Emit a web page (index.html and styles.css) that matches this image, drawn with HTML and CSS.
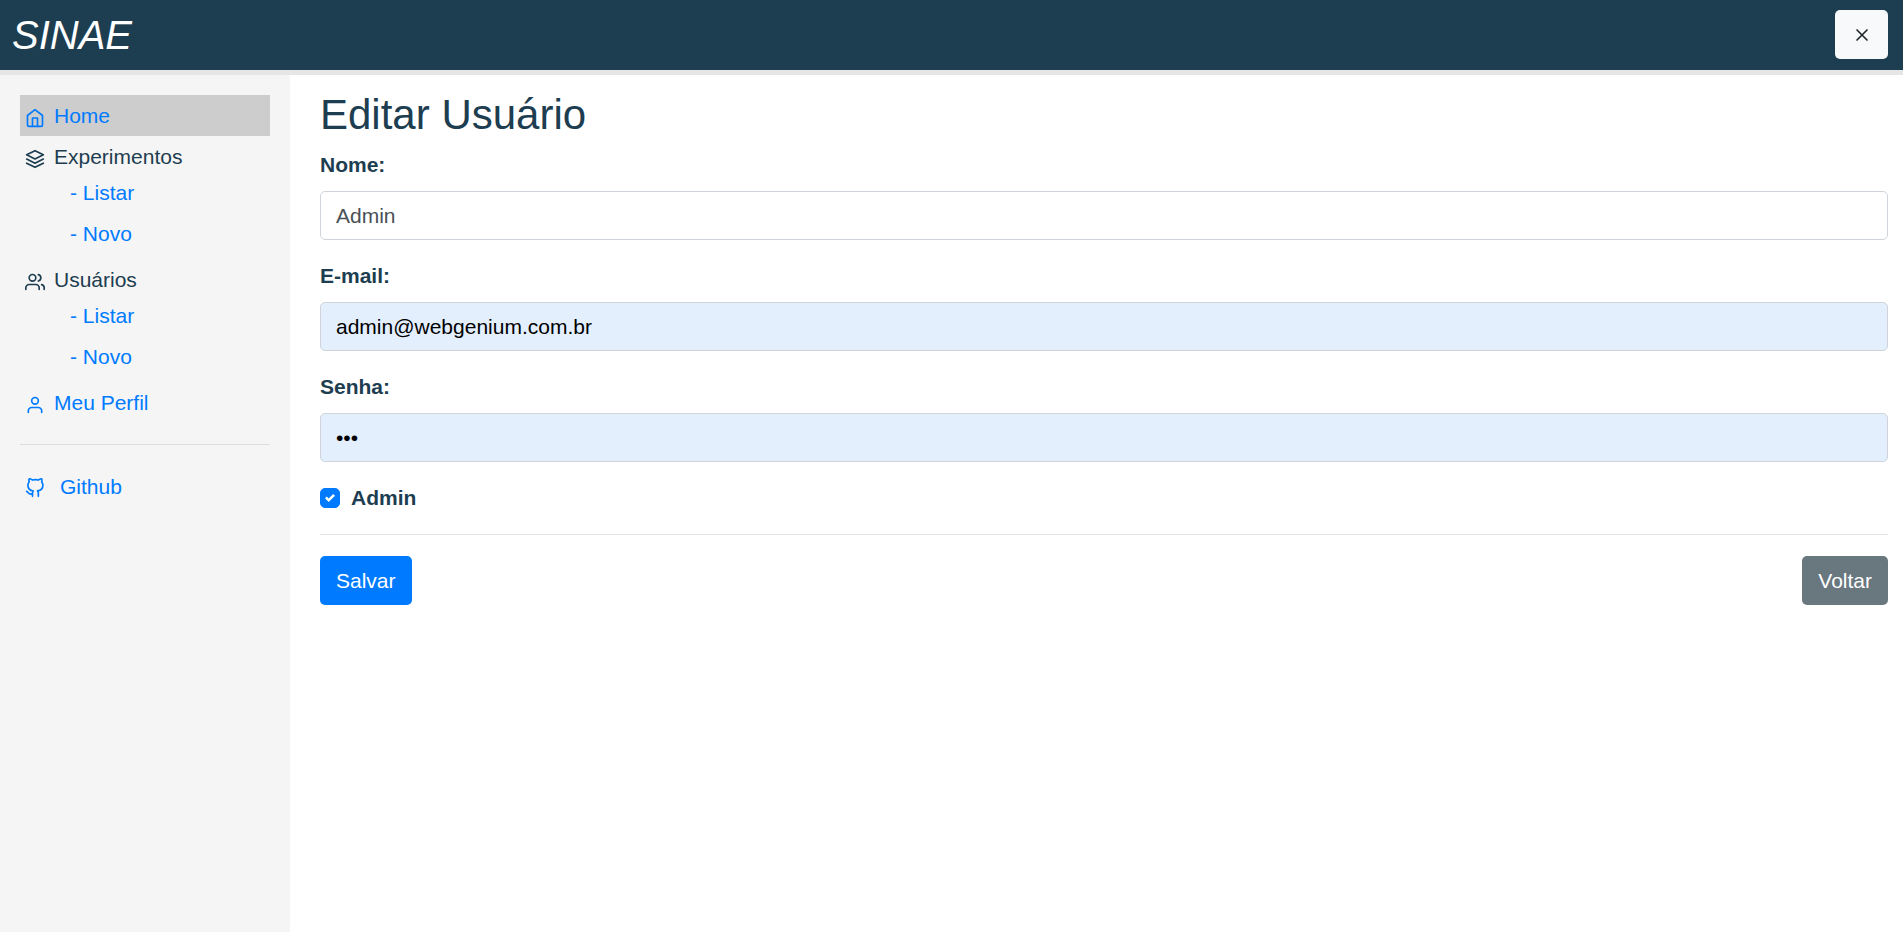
FILE: index.html
```html
<!DOCTYPE html>
<html lang="pt-BR">
<head>
  <meta charset="utf-8">
  <meta name="viewport" content="width=device-width, initial-scale=1">
  <title>SINAE - Editar Usuário</title>
  <link rel="stylesheet" href="styles.css">
</head>
<body>
  <header class="topbar">
    <span class="brand">SINAE</span>
    <button class="btn btn-light" type="button" aria-label="Fechar">
      <svg class="icon" viewBox="0 0 24 24"><path d="M18 6 6 18M6 6l12 12"/></svg>
    </button>
  </header>
  <div class="layout">
    <nav class="sidebar">
      <a class="item active" href="#">
        <svg class="icon" viewBox="0 0 24 24"><path d="M3 9l9-7 9 7v11a2 2 0 0 1-2 2H5a2 2 0 0 1-2-2z"/><path d="M9 22V12h6v10"/></svg>
        <span>Home</span>
      </a>
      <section class="group">
        <div class="item group-title">
          <svg class="icon" viewBox="0 0 24 24"><path d="M12 2 2 7l10 5 10-5-10-5z"/><path d="M2 17l10 5 10-5"/><path d="M2 12l10 5 10-5"/></svg>
          <span>Experimentos</span>
        </div>
        <a class="subitem" href="#">- Listar</a>
        <a class="subitem" href="#">- Novo</a>
      </section>
      <section class="group">
        <div class="item group-title">
          <svg class="icon" viewBox="0 0 24 24"><path d="M17 21v-2a4 4 0 0 0-4-4H5a4 4 0 0 0-4 4v2"/><circle cx="9" cy="7" r="4"/><path d="M23 21v-2a4 4 0 0 0-3-3.87"/><path d="M16 3.13a4 4 0 0 1 0 7.75"/></svg>
          <span>Usuários</span>
        </div>
        <a class="subitem" href="#">- Listar</a>
        <a class="subitem" href="#">- Novo</a>
      </section>
      <a class="item" href="#">
        <svg class="icon" viewBox="0 0 24 24"><path d="M20 21v-2a4 4 0 0 0-4-4H8a4 4 0 0 0-4 4v2"/><circle cx="12" cy="7" r="4"/></svg>
        <span>Meu Perfil</span>
      </a>
      <hr class="divider">
      <a class="item external" href="#">
        <svg class="icon" viewBox="0 0 24 24"><path d="M9 19c-5 1.5-5-2.5-7-3m14 6v-3.87a3.37 3.37 0 0 0-.94-2.61c3.14-.35 6.44-1.54 6.44-7A5.44 5.44 0 0 0 20 4.77 5.07 5.07 0 0 0 19.91 1S18.73.65 16 2.48a13.38 13.38 0 0 0-7 0C6.27.65 5.09 1 5.09 1A5.07 5.07 0 0 0 5 4.77a5.44 5.44 0 0 0-1.5 3.78c0 5.42 3.3 6.61 6.44 7A3.37 3.37 0 0 0 9 18.13V22"/></svg>
        <span>Github</span>
      </a>
    </nav>
    <main class="content">
      <h1 class="title">Editar Usuário</h1>
      <form>
        <div class="field">
          <label for="nome">Nome:</label>
          <input class="control" id="nome" type="text" value="Admin">
        </div>
        <div class="field">
          <label for="email">E-mail:</label>
          <input class="control filled" id="email" type="email" value="admin@webgenium.com.br">
        </div>
        <div class="field">
          <label for="senha">Senha:</label>
          <input class="control filled" id="senha" type="password" value="123">
        </div>
        <div class="check">
          <input class="checkbox" id="admin" type="checkbox" checked>
          <label for="admin">Admin</label>
        </div>
        <hr class="rule">
        <div class="actions">
          <button class="btn btn-primary" type="button">Salvar</button>
          <a class="btn btn-secondary" href="#">Voltar</a>
        </div>
      </form>
    </main>
  </div>
</body>
</html>
```
FILE: styles.css
```css
* {
  box-sizing: border-box;
}

body {
  margin: 0;
  min-height: 100vh;
  display: flex;
  flex-direction: column;
  background: #fff;
  color: #1d3d50;
  font-family: "Liberation Sans", Arial, sans-serif;
  font-size: 21px;
  line-height: 30px;
}

a {
  color: #007bff;
  text-decoration: none;
}

.icon {
  display: block;
  flex: none;
  width: 20px;
  height: 20px;
  fill: none;
  stroke: currentColor;
  stroke-width: 2;
  stroke-linecap: round;
  stroke-linejoin: round;
}

.topbar {
  display: flex;
  align-items: center;
  justify-content: space-between;
  padding: 10px 15px 11px 12px;
  background: #1d3d50;
  border-bottom: 5px solid #e6e6e6;
}

.brand {
  color: #fff;
  font-size: 40px;
  font-style: italic;
  line-height: 48px;
}

.layout {
  flex: 1;
  display: flex;
}

.sidebar {
  flex: none;
  width: 290px;
  padding: 20px;
  background: #f5f5f5;
}

.item {
  display: flex;
  align-items: center;
  gap: 9px;
  padding: 6px 5px 5px;
}

.item .icon {
  margin-top: 4px;
}

.active {
  background: #cdcdcd;
}

.group {
  margin-bottom: 5px;
}

.group-title {
  padding-bottom: 0;
}

.subitem {
  display: block;
  padding: 6px 5px 5px 50px;
}

.divider {
  margin: 21px 0;
  border: 0;
  border-top: 1px solid #dcdcdc;
}

.external {
  gap: 15px;
}

.external .icon {
  margin-top: 2px;
}

.content {
  flex: 1;
  padding: 15px 15px 15px 30px;
}

.title {
  margin: 0 0 10px;
  font-size: 42px;
  font-weight: 400;
  line-height: 50px;
}

.field {
  display: grid;
  gap: 11px;
  margin-bottom: 21px;
}

label {
  font-weight: 700;
}

.control {
  width: 100%;
  height: 49px;
  padding: 0 15px;
  border: 1px solid #ced4da;
  border-radius: 5px;
  background: #fff;
  color: #495057;
  font: inherit;
}

.filled {
  background: #e3effd;
  color: #000;
}

.check {
  display: flex;
  align-items: center;
  gap: 11px;
}

.checkbox {
  appearance: none;
  flex: none;
  width: 20px;
  height: 20px;
  margin: 0;
  border-radius: 5px;
  background: #fff;
  border: 1px solid #adb5bd;
}

.checkbox:checked {
  border-color: #007bff;
  background: #007bff url("data:image/svg+xml,%3Csvg xmlns='http://www.w3.org/2000/svg' viewBox='0 0 8 8'%3E%3Cpath fill='%23fff' d='M6.564.75l-3.59 3.612-1.538-1.55L0 4.26l2.974 2.99L8 2.193z'/%3E%3C/svg%3E") center / 10px 10px no-repeat;
}

.rule {
  margin: 21px 0;
  border: 0;
  border-top: 1px solid #e5e5e5;
}

.actions {
  display: flex;
  justify-content: space-between;
}

.btn {
  display: inline-flex;
  align-items: center;
  justify-content: center;
  height: 49px;
  padding: 0 16px;
  border: 0;
  border-radius: 5px;
  font: inherit;
  cursor: pointer;
}

.btn-light {
  width: 53px;
  background: #f8f9fa;
  color: #212529;
}

.btn-primary {
  background: #007bff;
  color: #fff;
}

.btn-secondary {
  background: #69777e;
  color: #fff;
}
```
